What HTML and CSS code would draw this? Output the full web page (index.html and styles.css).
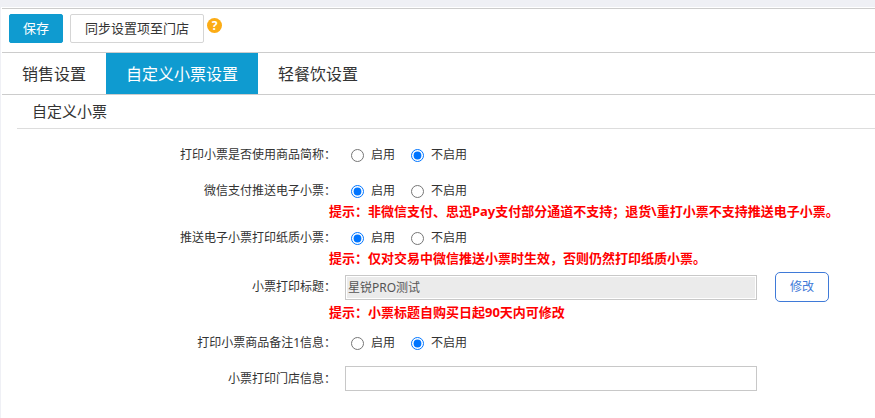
FILE: index.html
```
<!DOCTYPE html>
<html lang="zh-CN">
<head>
	<meta charset="utf-8">
	<title>自定义小票设置</title>
	<link rel="stylesheet" href="styles.css">
</head>
<body>
	<div class="page">
		<div class="toolbar">
			<button type="button" class="btn btn-primary">保存</button>
			<button type="button" class="btn">同步设置项至门店</button>
			<span class="help">?</span>
		</div>
		<div class="tabs">
			<a href="#">销售设置</a>
			<a href="#" class="active">自定义小票设置</a>
			<a href="#">轻餐饮设置</a>
		</div>
		<h2 class="title">自定义小票</h2>
		<form class="form">
			<div class="item">
				<div class="row">
					<span class="name">打印小票是否使用商品简称：</span>
					<label class="radio"><input type="radio" name="short">启用</label>
					<label class="radio"><input type="radio" name="short" checked>不启用</label>
				</div>
			</div>
			<div class="item has-tip">
				<div class="row">
					<span class="name">微信支付推送电子小票：</span>
					<label class="radio"><input type="radio" name="wechat" checked>启用</label>
					<label class="radio"><input type="radio" name="wechat">不启用</label>
				</div>
				<p class="tip">提示：非微信支付、思迅Pay支付部分通道不支持；退货\重打小票不支持推送电子小票。</p>
			</div>
			<div class="item has-tip">
				<div class="row">
					<span class="name">推送电子小票打印纸质小票：</span>
					<label class="radio"><input type="radio" name="paper" checked>启用</label>
					<label class="radio"><input type="radio" name="paper">不启用</label>
				</div>
				<p class="tip">提示：仅对交易中微信推送小票时生效，否则仍然打印纸质小票。</p>
			</div>
			<div class="item">
				<div class="row row-edit">
					<label class="name" for="receiptTitle">小票打印标题：</label>
					<input type="text" class="text" id="receiptTitle" value="星锐PRO测试" disabled>
					<button type="button" class="edit">修改</button>
				</div>
				<p class="tip">提示：小票标题自购买日起90天内可修改</p>
			</div>
			<div class="item">
				<div class="row">
					<span class="name">打印小票商品备注1信息：</span>
					<label class="radio"><input type="radio" name="remark">启用</label>
					<label class="radio"><input type="radio" name="remark" checked>不启用</label>
				</div>
			</div>
			<div class="item">
				<div class="row row-text">
					<label class="name" for="shopInfo">小票打印门店信息：</label>
					<input type="text" class="text" id="shopInfo">
				</div>
			</div>
		</form>
	</div>
</body>
</html>
```

FILE: styles.css
```
*{
	margin: 0;
	padding: 0;
	box-sizing: border-box;
}
body{
	padding: 7px 0 0 1px;
	background: #eff0f5;
	color: #333;
	font: 12px/16px "Noto Sans", "Noto Sans CJK SC", sans-serif;
}
button,input{
	font: inherit;
	color: inherit;
}
.page{
	min-height: calc(100vh - 7px);
	padding: 1px 0 0 1px;
	background: #fff;
}
.toolbar{
	display: flex;
	align-items: flex-start;
	height: 45px;
	padding: 5px 7px;
	border-top: 1px solid #ccc;
	border-bottom: 1px solid #ccc;
}
.btn{
	height: 29px;
	margin-right: 7px;
	padding: 0 14px;
	border: 1px solid #d5d5d5;
	border-radius: 2px;
	background: #fff;
	font-size: 13px;
	line-height: 27px;
	cursor: pointer;
}
.btn-primary{
	padding: 0 13px;
	border-color: #0f9bd0;
	background: #0f9bd0;
	color: #fff;
}
.help{
	width: 15px;
	height: 15px;
	margin: 4px 0 0 -4px;
	border-radius: 50%;
	background: #fcac15;
	color: #fff;
	font-weight: bold;
	line-height: 15px;
	text-align: center;
}
.tabs{
	display: flex;
	height: 42px;
	border-bottom: 1px solid #ccc;
}
.tabs a{
	padding: 2px 20px 0;
	color: #333;
	font-size: 16px;
	line-height: 39px;
	text-decoration: none;
}
.tabs .active{
	background: #0f9bd0;
	color: #fff;
}
.title{
	height: 34px;
	margin-left: 15px;
	padding-left: 15px;
	border-bottom: 1px solid #ddd;
	font-size: 15px;
	font-weight: normal;
	line-height: 33px;
}
.form{
	padding-top: 13px;
}
.item{
	margin-bottom: 10px;
}
.has-tip{
	margin-bottom: 6px;
}
.row{
	display: flex;
	align-items: center;
	height: 26px;
}
.name{
	width: 334px;
	margin-right: 9px;
	text-align: right;
}
.radio{
	display: flex;
	align-items: center;
	margin: 0 10px 0 6px;
}
.radio input{
	width: 13px;
	height: 13px;
	margin-right: 7px;
}
.text{
	width: 412px;
	height: 25px;
	padding: 0 2px;
	border: 1px solid #c8c8c8;
	background: #fff;
}
.text:disabled{
	background: #ebebeb;
	box-shadow: inset 0 0 0 1px #fff;
	color: #555;
}
.tip{
	padding-left: 327px;
	color: #f00;
	font-size: 13px;
	font-weight: bold;
	line-height: 15px;
}
.row-text{
	height: 25px;
}
.row-edit{
	height: 30px;
}
.row-edit + .tip{
	padding-top: 3px;
}
.edit{
	width: 54px;
	height: 30px;
	margin-left: 18px;
	border: 1px solid #3f7ad8;
	border-radius: 5px;
	background: #fff;
	color: #3f7ad8;
	cursor: pointer;
}
```
